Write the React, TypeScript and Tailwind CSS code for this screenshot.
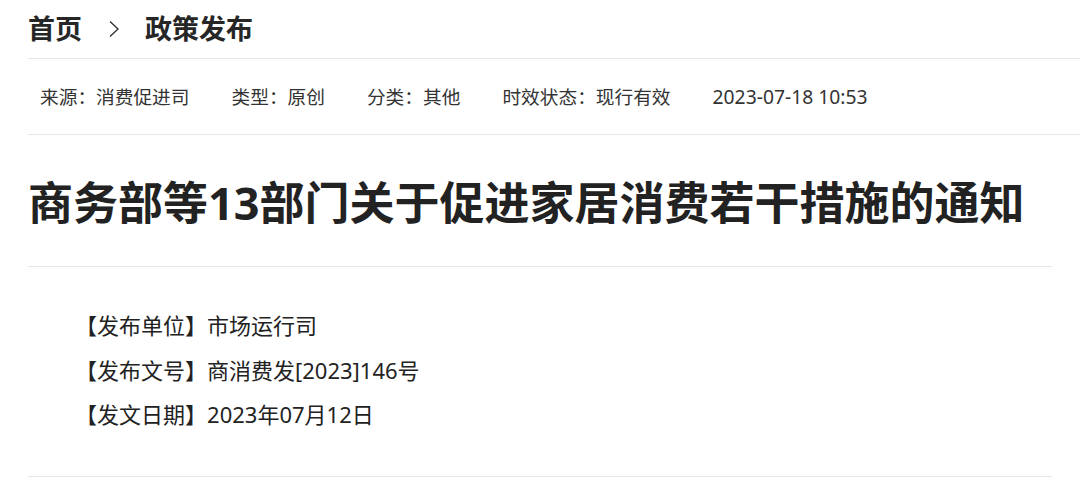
const meta = [
  { label: "来源", value: "消费促进司" },
  { label: "类型", value: "原创" },
  { label: "分类", value: "其他" },
  { label: "时效状态", value: "现行有效" },
];

const fields = [
  { label: "发布单位", value: "市场运行司" },
  { label: "发布文号", value: "商消费发[2023]146号" },
  { label: "发文日期", value: "2023年07月12日" },
];

export default function App() {
  return (
    <div
      className="min-h-[501px] w-[1080px] overflow-hidden bg-white pl-[28px] text-[#262626]"
      style={{ fontFamily: '"Noto Sans", "Noto Sans CJK SC", sans-serif' }}
    >
      {/* breadcrumb */}
      <div className="flex h-[59px] items-center border-b border-[#e6e6e6] pb-[1px]">
        <span className="text-[27px] font-bold leading-none">首页</span>
        <svg className="ml-[26px] mr-[25px] h-[18px] w-[12px]" viewBox="0 0 12 18" fill="none">
          <path d="M2 1.5 L10 9 L2 16.5" stroke="#333" strokeWidth="1.4" />
        </svg>
        <span className="text-[27px] font-bold leading-none">政策发布</span>
      </div>

      {/* meta row */}
      <div className="flex h-[76px] items-center gap-[42px] border-b border-[#e6e6e6] pl-3 pt-[1px] text-[18.7px] text-[#333]">
        {meta.map((m) => (
          <span key={m.label}>
            {m.label}：{m.value}
          </span>
        ))}
        <span className="text-[19.3px]">2023-07-18 10:53</span>
      </div>

      <div className="w-[1024px]">
        {/* title */}
        <div className="flex h-[132px] items-center border-b border-[#e6e6e6] pt-[3px]">
          <h1 className="whitespace-nowrap text-[45px] font-bold leading-none text-[#222]">
            商务部等13部门关于促进家居消费若干措施的通知
          </h1>
        </div>

        {/* fields */}
        <div className="border-b border-[#e6e6e6] pb-[39px] pl-[47px] pt-[36px] text-[22px] leading-[44.5px] text-[#222]">
          {fields.map((f) => (
            <div key={f.label}>
              【{f.label}】{f.value}
            </div>
          ))}
        </div>
      </div>
    </div>
  );
}
